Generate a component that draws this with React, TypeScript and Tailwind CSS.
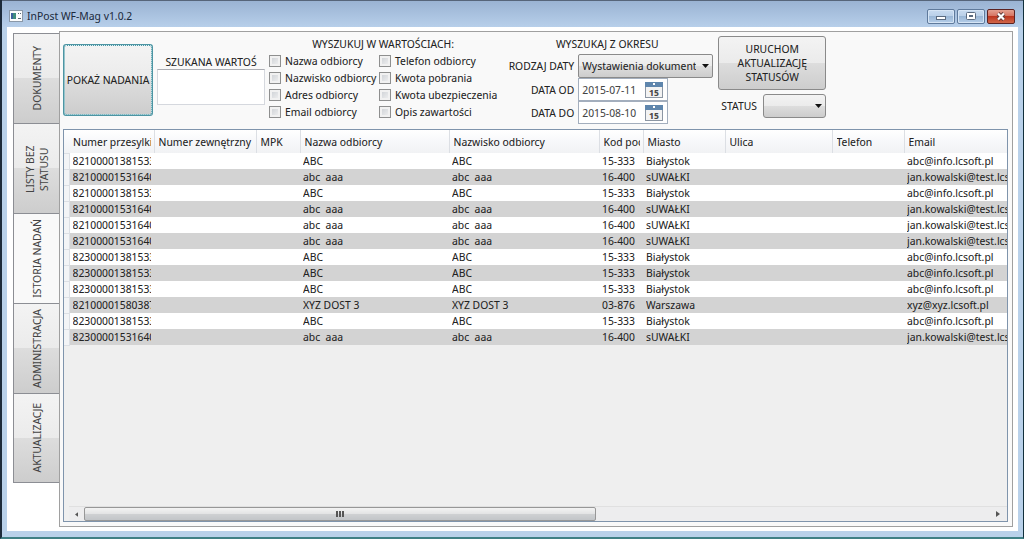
import { useState } from "react";

const tabs = ["DOKUMENTY", "LISTY BEZ STATUSU", "ISTORIA NADAŃ", "ADMINISTRACJA", "AKTUALIZACJE"];

const leftFields = ["Nazwa odbiorcy", "Nazwisko odbiorcy", "Adres odbiorcy", "Email odbiorcy"];
const rightFields = ["Telefon odbiorcy", "Kwota pobrania", "Kwota ubezpieczenia", "Opis zawartości"];

const columns = [
  { name: "Numer przesylki", width: "w-[85px]" },
  { name: "Numer zewnętrzny", width: "w-[102px]" },
  { name: "MPK", width: "w-[44px]" },
  { name: "Nazwa odbiorcy", width: "w-[149px]" },
  { name: "Nazwisko odbiorcy", width: "w-[150px]" },
  { name: "Kod pocz", width: "w-[44px]" },
  { name: "Miasto", width: "w-[82px]" },
  { name: "Ulica", width: "w-[107px]" },
  { name: "Telefon", width: "w-[72px]" },
  { name: "Email", width: "w-[180px]" },
];

const people = {
  abc: ["ABC", "15-333", "Białystok", "abc@info.lcsoft.pl"],
  aaa: ["abc  aaa", "16-400", "sUWAŁKI", "jan.kowalski@test.lcsoft.pl"],
  xyz: ["XYZ DOST 3", "03-876", "Warszawa", "xyz@xyz.lcsoft.pl"],
};

const shipments: { number: string; person: keyof typeof people }[] = [
  { number: "82100001381533", person: "abc" },
  { number: "82100001531640", person: "aaa" },
  { number: "82100001381533", person: "abc" },
  { number: "82100001531640", person: "aaa" },
  { number: "82100001531640", person: "aaa" },
  { number: "82100001531640", person: "aaa" },
  { number: "82300001381533", person: "abc" },
  { number: "82300001381533", person: "abc" },
  { number: "82300001381533", person: "abc" },
  { number: "82100001580387", person: "xyz" },
  { number: "82300001381533", person: "abc" },
  { number: "82300001531640", person: "aaa" },
];

const buttonFace = "bg-[linear-gradient(#f3f3f3,#ebebeb_50%,#dddddd_50%,#cdcdcd)]";

function TitleBar() {
  const control =
    "flex h-[15px] w-7 items-center justify-center rounded-xs border border-[#5f7a9c] bg-[linear-gradient(#c8dbf0,#b9cfe8_50%,#9bb7d6_50%,#b5cee9)] shadow-[inset_0_0_0_1px_#d6e5f5]";
  return (
    <header className="flex h-[27px] items-center justify-between border-t border-[#56657a] bg-[linear-gradient(#9ab3d3,#b7cfea)] pt-1 pr-2 pl-[7px]">
      <div className="flex items-center gap-1">
        <svg width="14" height="12" viewBox="0 0 14 12">
          <rect x="0.5" y="0.5" width="13" height="11" fill="#fbfcfd" stroke="#8a98a8" />
          <rect x="2" y="3" width="5" height="6" fill="#3f8d7c" />
          <rect x="2" y="3" width="2" height="6" fill="#3c5f9c" />
          <path d="M9 3.500h1M11 3.500h1M9 8.500h3" stroke="#5a6673" />
        </svg>
        <h1 className="text-[11px] leading-4 text-[#1c2b3d]">InPost WF-Mag v1.0.2</h1>
      </div>
      <div className="flex gap-[2px]">
        <button aria-label="Minimalizuj" className={control}>
          <svg width="12" height="9" viewBox="0 0 12 9">
            <rect x="1.5" y="4.5" width="9" height="3" fill="#fff" stroke="#5b6b80" />
          </svg>
        </button>
        <button aria-label="Maksymalizuj" className={control}>
          <svg width="12" height="9" viewBox="0 0 12 9">
            <rect x="1.5" y="0.5" width="9" height="7" rx="1" fill="#fff" stroke="#5b6b80" />
            <rect x="4.5" y="3.5" width="3" height="1" fill="#9bb7d6" stroke="#5b6b80" />
          </svg>
        </button>
        <button
          aria-label="Zamknij"
          className="flex h-[15px] w-7 items-center justify-center rounded-xs border border-[#5c2323] bg-[linear-gradient(#e3a091,#d5705d_50%,#bd3620_50%,#d0674a)]"
        >
          <svg width="12" height="9" viewBox="0 0 12 9">
            <path d="M3 1.500L9 7.500M9 1.500L3 7.500" stroke="#5f3a3a" strokeWidth="4" />
            <path d="M3 1.500L9 7.500M9 1.500L3 7.500" stroke="#fff" strokeWidth="2.200" />
          </svg>
        </button>
      </div>
    </header>
  );
}

function Arrow() {
  return (
    <svg className="pointer-events-none absolute top-1/2 right-1 -translate-y-1/2" width="7" height="4" viewBox="0 0 7 4">
      <path d="M0 0h7L3.500 4z" fill="#111" />
    </svg>
  );
}

function CheckList({ fields }: { fields: string[] }) {
  return (
    <div className="flex flex-col">
      {fields.map((field) => (
        <label key={field} className="flex h-[17px] items-center gap-1 whitespace-nowrap">
          <input
            type="checkbox"
            className="size-3 appearance-none border border-[#8e8f8f] bg-[linear-gradient(135deg,#c9cdd2,#f4f4f4)] shadow-[inset_0_0_0_2px_#f1f1f1] checked:bg-[#4a6a94]"
          />
          {field}
        </label>
      ))}
    </div>
  );
}

function DateField({ id, value }: { id: string; value: string }) {
  return (
    <div className="flex h-[23px] w-[90px] items-center justify-between border border-[#a3aebd] bg-white pr-1 pl-[3px]">
      <input id={id} type="text" defaultValue={value} className="w-[62px] bg-transparent text-[#444] outline-none" />
      <button aria-label="Wybierz datę">
        <svg width="18" height="17" viewBox="0 0 18 17">
          <rect x="0.5" y="1.5" width="17" height="15" fill="#f3f3f3" stroke="#8c96a3" />
          <rect x="0" y="1" width="18" height="5" fill="#5f86ad" />
          <rect x="8" y="2" width="2" height="2" fill="#fff" />
          <text x="9" y="15" textAnchor="middle" fontSize="9" fontWeight="700" fill="#4a4a4a">
            15
          </text>
        </svg>
      </button>
    </div>
  );
}

function Toolbar() {
  return (
    <div className="flex items-start">
      <button
        className={`mt-2 h-[72px] w-[90px] shrink-0 rounded-[3px] border-2 border-[#4d95a3] whitespace-nowrap outline-1 -outline-offset-2 outline-dotted outline-[#dff3f6] ${buttonFace}`}
      >
        <span className="flex justify-center">POKAŻ NADANIA</span>
      </button>
      <div className="mt-[18px] ml-1 flex w-[108px] shrink-0 flex-col">
        <label htmlFor="query" className="h-[15px] text-center leading-4">
          SZUKANA WARTOŚ
        </label>
        <input id="query" type="text" className="h-9 w-full border border-[#d5d8de] border-t-[#abadb3] bg-white px-1 outline-none" />
      </div>
      <fieldset className="ml-1 w-[224px] shrink-0">
        <legend className="w-full text-center leading-4">WYSZUKUJ W WARTOŚCIACH:</legend>
        <div className="grid grid-cols-[110px_1fr]">
          <CheckList fields={leftFields} />
          <CheckList fields={rightFields} />
        </div>
      </fieldset>
      <div className="ml-2 flex w-[208px] shrink-0 flex-col">
        <div className="h-[18px] pr-1 text-center leading-4">WYSZUKAJ Z OKRESU</div>
        <div className="grid grid-cols-[1fr_135px] items-center gap-x-1">
          <label htmlFor="dateKind" className="text-right">
            RODZAJ DATY
          </label>
          <div className="relative">
            <select
              id="dateKind"
              className={`h-6 w-full appearance-none overflow-hidden rounded-[2px] border border-[#8a8a8a] pr-4 pl-[3px] outline-none ${buttonFace}`}
            >
              <option>Wystawienia dokumentu</option>
            </select>
            <Arrow />
          </div>
          <label htmlFor="dateFrom" className="text-right">
            DATA OD
          </label>
          <DateField id="dateFrom" value="2015-07-11" />
          <label htmlFor="dateTo" className="text-right">
            DATA DO
          </label>
          <DateField id="dateTo" value="2015-08-10" />
        </div>
      </div>
      <div className="ml-[5px] flex w-[108px] shrink-0 flex-col gap-1">
        <button className={`h-[54px] rounded-[3px] border border-[#8a8a8a] px-2 leading-[14px] ${buttonFace}`}>
          URUCHOM AKTUALIZACJĘ STATUSÓW
        </button>
        <div className="flex items-center justify-between pl-[3px]">
          <label htmlFor="status">STATUS</label>
          <div className="relative">
            <select
              id="status"
              className={`h-6 w-[63px] appearance-none rounded-[3px] border border-[#8a8a8a] pl-1 outline-none ${buttonFace}`}
            >
              <option></option>
            </select>
            <Arrow />
          </div>
        </div>
      </div>
    </div>
  );
}

function Cell({ children }: { children?: string }) {
  return (
    <td className="p-0">
      <div className="mx-[3px] overflow-hidden whitespace-pre">{children}</div>
    </td>
  );
}

function ShipmentTable() {
  return (
    <div className="overflow-hidden">
      <table className="w-[1020px] table-fixed border-collapse">
        <thead>
          <tr className="h-[23px] bg-[linear-gradient(#ffffff,#f7f8fa_50%,#f1f2f4)]">
            <th className="w-[5px] p-0" aria-label="Wiersz" />
            {columns.map((column) => (
              <th key={column.name} className={`border-r border-[#dcdfe4] p-0 text-left font-normal ${column.width}`}>
                <div className="mr-[3px] ml-1 overflow-hidden whitespace-nowrap">{column.name}</div>
              </th>
            ))}
          </tr>
        </thead>
        <tbody>
          {shipments.map(({ number, person }, index) => {
            const [name, postCode, city, email] = people[person];
            return (
              <tr key={index} className="h-4 leading-4 odd:bg-white even:bg-[#d3d3d3]">
                <td className="border-y border-r border-[#dcdfe4] bg-[#f3f4f6] p-0" />
                <Cell>{number}</Cell>
                <Cell />
                <Cell />
                <Cell>{name}</Cell>
                <Cell>{name}</Cell>
                <Cell>{postCode}</Cell>
                <Cell>{city}</Cell>
                <Cell />
                <Cell />
                <Cell>{email}</Cell>
              </tr>
            );
          })}
        </tbody>
      </table>
    </div>
  );
}

function ScrollBar() {
  return (
    <div className="mt-auto ml-[5px] flex h-[15px] items-center border-t border-[#e0e0e0] bg-[#ededee]">
      <button aria-label="Przewiń w lewo" className="flex h-full w-[15px] items-center justify-center">
        <svg width="3" height="5" viewBox="0 0 4 6">
          <path d="M4 0v6L0 3z" fill="#555" />
        </svg>
      </button>
      <div className="h-full grow">
        <div className="flex h-full w-[56.6%] items-center justify-center gap-px rounded-[2px] border border-[#979797] bg-[linear-gradient(#f3f3f3,#e2e3e4_50%,#cfd1d3_50%,#c2c5c8)]">
          <span className="h-[6px] w-[2px] bg-[#555]" />
          <span className="h-[6px] w-[2px] bg-[#555]" />
          <span className="h-[6px] w-[2px] bg-[#555]" />
        </div>
      </div>
      <button aria-label="Przewiń w prawo" className="flex h-full w-[18px] items-center justify-center">
        <svg width="4" height="6" viewBox="0 0 4 6">
          <path d="M0 0v6L4 3z" fill="#555" />
        </svg>
      </button>
    </div>
  );
}

export default function App() {
  const [active, setActive] = useState("ISTORIA NADAŃ");

  return (
    <div className="flex min-h-screen flex-col border-r border-b-2 border-l-2 border-r-[#12303c] border-b-[#3f8085] border-l-[#1d2b3a] bg-[#b9d1ea] font-['Noto_Sans_Display','Noto_Sans','Open_Sans',sans-serif] text-[11px] leading-4 text-[#222]">
      <TitleBar />
      <div className="mx-[5px] mb-[6px] flex grow bg-white pt-1 pr-[5px] pb-1 pl-[6px]">
        <nav role="tablist" aria-orientation="vertical" className="flex w-[46px] shrink-0 flex-col pt-[2px]">
          {tabs.map((tab) => (
            <button
              key={tab}
              role="tab"
              aria-selected={tab === active}
              onClick={() => setActive(tab)}
              className={`flex h-[90px] items-center justify-center overflow-hidden border border-r-0 border-b-0 border-[#8c8e94] last:border-b ${
                tab === active ? "bg-[#f9f9f9]" : buttonFace
              }`}
            >
              <span className="max-h-[80px] rotate-180 text-center leading-[14px] text-[#444] [writing-mode:vertical-rl]">
                {tab}
              </span>
            </button>
          ))}
        </nav>
        <main className="flex min-w-0 grow flex-col border border-[#a0a0a0] bg-[#f9f9f9] py-1 pr-1 pl-[3px]">
          <Toolbar />
          <div className="mt-[5px] flex grow flex-col overflow-hidden border border-[#7f94ac] bg-[#efefef]">
            <ShipmentTable />
            <ScrollBar />
          </div>
        </main>
      </div>
    </div>
  );
}
